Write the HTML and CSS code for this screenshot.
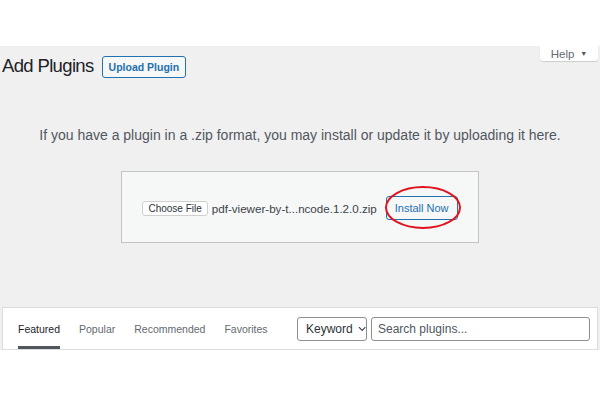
FILE: index.html
```html
<!DOCTYPE html>
<html>
<head>
<meta charset="utf-8">
<link rel="stylesheet" href="styles.css">
</head>
<body>
<div class="top"></div>
<div class="main">
  <div class="help-row"><div class="help">Help <span class="tri">▼</span></div></div>
  <div class="title-row">
    <h1 class="title">Add Plugins</h1>
    <span class="upload-btn">Upload Plugin</span>
  </div>
  <p class="desc">If you have a plugin in a .zip format, you may install or update it by uploading it here.</p>
  <div class="upload-box">
    <span class="choose">Choose File</span>
    <span class="fname">pdf-viewer-by-t...ncode.1.2.0.zip</span>
    <span class="install-wrap">
      <span class="install">Install Now</span>
      <svg class="ring" width="78" height="45" viewBox="0 0 78 45"><ellipse cx="39" cy="22.5" rx="37" ry="20.5" fill="none" stroke="#e0141e" stroke-width="2"/></svg>
    </span>
  </div>
  <div class="tabbar">
    <div class="tabs">
      <span class="tab active">Featured</span>
      <span class="tab">Popular</span>
      <span class="tab">Recommended</span>
      <span class="tab">Favorites</span>
    </div>
    <div class="search">
      <span class="select">Keyword <svg width="9" height="6" viewBox="0 0 9 6"><path d="M1 1l3.5 3.5L8 1" fill="none" stroke="#3c434a" stroke-width="1.2"/></svg></span>
      <span class="input">Search plugins...</span>
    </div>
  </div>
</div>
</body>
</html>
```
FILE: styles.css
```css
body { margin: 0; font-family: "Liberation Sans", Arial, sans-serif; background: #fff; color: #1d2327; }
.top { height: 46px; background: #fff; }
.main { background: #f0f0f1; height: 304px; position: relative; }
.help-row { display: flex; justify-content: flex-end; padding-right: 2px; height: 0; }
.help { width: 58px; height: 15px; background: #fff; box-shadow: 0 1px 1px rgba(0,0,0,0.15); border-radius: 0 0 3px 3px; font-size: 11.5px; color: #646970; display: flex; align-items: center; justify-content: center; gap: 6px; }
.tri { font-size: 7px; color: #50575e; }
.title-row { display: flex; align-items: center; gap: 8px; padding: 8px 0 0 2px; }
.title { font-size: 18.5px; font-weight: 400; margin: 0; color: #1d2327; line-height: 24px; letter-spacing: -0.65px; }
.upload-btn { border: 1px solid #2271b1; color: #2271b1; background: #f6f7f7; border-radius: 3px; font-size: 10.5px; font-weight: 700; padding: 0 6px; height: 20px; line-height: 20px; margin-top: 1px; }
.desc { margin: 49px 0 0; text-align: center; font-size: 14px; color: #50575e; }
.upload-box { margin: 28px auto 0; width: 358px; height: 72px; background: #f6f7f7; border: 1px solid #c3c4c7; display: flex; align-items: center; justify-content: center; box-sizing: border-box; padding-left: 0; padding-top: 2px; }
.choose { font-size: 10px; background: #fff; border: 1px solid #d0d0d0; border-radius: 3px; padding: 1px 5px; color: #2c3338; }
.fname { font-size: 11.6px; color: #3c434a; margin-left: 4px; }
.install-wrap { position: relative; margin-left: 9px; display: inline-flex; }
.install { border: 1px solid #2271b1; color: #2271b1; background: #f6f7f7; border-radius: 3px; font-size: 11px; padding: 0 8px; height: 22px; line-height: 22px; }
.ring { position: absolute; left: -2px; top: -11px; }
.tabbar { position: absolute; left: 2px; right: 2px; bottom: 0; height: 43px; background: #fff; border: 1px solid #dcdcde; box-sizing: border-box; display: flex; justify-content: space-between; align-items: center; }
.tabs { display: flex; gap: 19px; padding-left: 15px; height: 100%; }
.tab { font-size: 10.5px; color: #646970; display: flex; align-items: center; position: relative; }
.tab.active { color: #1d2327; }
.tab.active::after { content: ""; position: absolute; left: 0; right: 0; bottom: 0; height: 3px; background: #50575e; }
.search { display: flex; gap: 4px; padding-right: 7px; }
.select { width: 70px; height: 24px; box-sizing: border-box; border: 1px solid #8c8f94; border-radius: 3px; font-size: 12px; color: #2c3338; display: flex; align-items: center; gap: 5px; padding-left: 8px; }
.input { width: 219px; height: 24px; box-sizing: border-box; border: 1px solid #8c8f94; border-radius: 3px; font-size: 12px; color: #50575e; display: flex; align-items: center; padding-left: 6px; }
```
